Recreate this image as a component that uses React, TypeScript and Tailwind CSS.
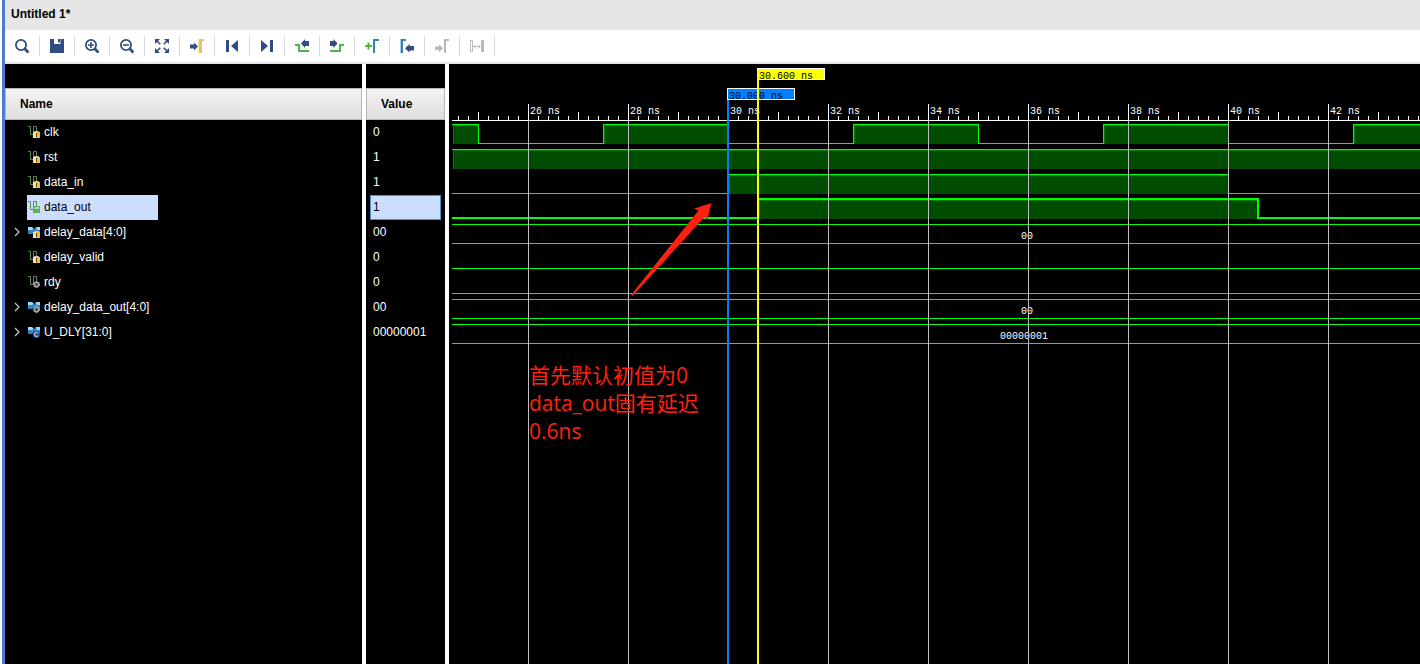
import React from "react";

const NAVY = "#2f4d82";
const GREEN = "#4cb944";
const BLUE = "#3580b4";
const GRAY = "#b9b9b9";

function Lens({ children }: { children?: React.ReactNode }) {
  return (
    <g fill="none" stroke={NAVY}>
      <circle cx="7" cy="7" r="5.1" strokeWidth="1.8" />
      <path d="M10.8 10.8 L14.4 14.4" strokeWidth="2.8" />
      {children}
    </g>
  );
}

type Tool = { label: string; disabled?: boolean; icon: React.ReactNode };

const tools: Tool[] = [
  { label: "Find", icon: <Lens /> },
  {
    label: "Save",
    icon: (
      <g>
        <path d="M1 1H5V6H12V1H15V15H1Z" fill={NAVY} />
        <path d="M9 1H11V4.5H9Z" fill={NAVY} />
        <path d="M11 1H12V6H11Z" fill="#8fa0be" />
      </g>
    ),
  },
  { label: "Zoom in", icon: <Lens><path d="M4 7H10M7 4V10" strokeWidth="1.6" /></Lens> },
  { label: "Zoom out", icon: <Lens><path d="M4 7H10" strokeWidth="1.6" /></Lens> },
  {
    label: "Zoom fit",
    icon: (
      <g>
        <path d="M1 1H6L1 6ZM15 1V6L10 1ZM1 15V10L6 15ZM15 15H10L15 10Z" fill={NAVY} />
        <path d="M2 2L6.3 6.3M14 2L9.7 6.3M2 14L6.3 9.7M14 14L9.7 9.7" stroke={NAVY} strokeWidth="1.6" />
      </g>
    ),
  },
  {
    label: "Go to cursor",
    icon: (
      <g>
        <path d="M1 6.5H5V4.5L9 8.5L5 12.5V10.5H1Z" fill={NAVY} />
        <path d="M9 1H10V15H9Z" fill="#f3e7b8" />
        <path d="M10 1H15V3H13V15H10Z" fill="#dfc568" />
      </g>
    ),
  },
  { label: "Go to start", icon: <path d="M2 2H5V14H2ZM14 2V14L7 8Z" fill={NAVY} /> },
  { label: "Go to end", icon: <path d="M11 2H14V14H11ZM2 2V14L9 8Z" fill={NAVY} /> },
  {
    label: "Previous transition",
    icon: (
      <g>
        <path d="M1 7H5V13H15" fill="none" stroke={GREEN} strokeWidth="2" />
        <path d="M15 3H11V1L7 5.5L11 10V8H15Z" fill={NAVY} />
      </g>
    ),
  },
  {
    label: "Next transition",
    icon: (
      <g>
        <path d="M1 13H11V7H15" fill="none" stroke={GREEN} strokeWidth="2" />
        <path d="M1 3H4.5V1L8.5 5.5L4.5 10V8H1Z" fill={NAVY} />
      </g>
    ),
  },
  {
    label: "Add marker",
    icon: (
      <g>
        <path d="M1 8H8M4.5 4.5V11.5" stroke={GREEN} strokeWidth="2" />
        <path d="M9 1H15V3H11V15H9Z" fill={BLUE} />
      </g>
    ),
  },
  {
    label: "Previous marker",
    icon: (
      <g>
        <path d="M1 1H2V15H1Z" fill="#a8cbe0" />
        <path d="M2 1H7V3H4V15H2Z" fill={BLUE} />
        <path d="M15 8H10.5V6L6 10.2L10.5 14.5V12.5H15Z" fill={NAVY} />
      </g>
    ),
  },
  {
    label: "Next marker",
    disabled: true,
    icon: (
      <g fill={GRAY}>
        <path d="M1 8.5H5V6.2L9 10.2L5 14.2V12H1Z" />
        <path d="M10 1H15V3H12V15H10Z" />
      </g>
    ),
  },
  {
    label: "Swap cursors",
    disabled: true,
    icon: (
      <g>
        <path d="M1.5 2.5H3.5V13.5H1.5Z" fill="none" stroke={GRAY} />
        <path d="M12 2H15V14H12Z" fill={GRAY} />
        <path d="M5 8.5H11M6.8 6.5L4.8 8.5L6.8 10.5M9.2 6.5L11.2 8.5L9.2 10.5" fill="none" stroke={GRAY} />
      </g>
    ),
  },
];

type Badge = "lock" | "out" | "gear" | "const";
type Signal = { name: string; value: string; bus?: boolean; badge: Badge; selected?: boolean };

const signals: Signal[] = [
  { name: "clk", value: "0", badge: "lock" },
  { name: "rst", value: "1", badge: "lock" },
  { name: "data_in", value: "1", badge: "lock" },
  { name: "data_out", value: "1", badge: "out", selected: true },
  { name: "delay_data[4:0]", value: "00", bus: true, badge: "lock" },
  { name: "delay_valid", value: "0", badge: "lock" },
  { name: "rdy", value: "0", badge: "gear" },
  { name: "delay_data_out[4:0]", value: "00", bus: true, badge: "gear" },
  { name: "U_DLY[31:0]", value: "00000001", bus: true, badge: "const" },
];

function SignalIcon({ bus, badge }: { bus?: boolean; badge: Badge }) {
  return (
    <svg viewBox="0 0 12 12" className="size-3 shrink-0" aria-hidden="true">
      {bus ? (
        <g>
          <path d="M0 1H4L6 3L8 1H12V8H8L6 6.5L4 8H0Z" fill="#2f86c8" />
          <path d="M0 1H4L5.5 2.7L4 4H0ZM8 1H12V4H9Z" fill="#a5d8f5" />
        </g>
      ) : (
        <path d="M0 0.5H2.5V8.5H5.5V0.5H8.5V5" fill="none" stroke="#5b8a52" />
      )}
      {badge === "lock" && (
        <g>
          <path d="M6.5 6V5.5H10.5V6" fill="none" stroke="#c9c9c9" />
          <path d="M5 6H12V12H5Z" fill="#f0bd4c" />
          <path d="M5 6H8V12H5Z" fill="#f8dfa0" />
          <path d="M8 7H9V11H8Z" fill="#5c4a2a" />
        </g>
      )}
      {badge === "out" && (
        <g>
          <path d="M5 6L7 5H12V12H5Z" fill="#5eae58" />
          <path d="M6 7.5L8 6H11V8H6Z" fill="#b5deb0" />
        </g>
      )}
      {badge === "gear" && (
        <g>
          <circle cx="8.5" cy="8.5" r="3" fill="#9a9a9a" stroke="#c6c6c6" strokeDasharray="1.2 1" />
          <circle cx="8.5" cy="8.5" r="1.2" fill="#333" />
        </g>
      )}
      {badge === "const" && (
        <g>
          <circle cx="8.5" cy="8.5" r="3.5" fill="#2a4f9e" />
          <path d="M10 7.2A2 2 0 1 0 10 9.8" fill="none" stroke="#e6eeff" />
        </g>
      )}
    </svg>
  );
}

const headCell =
  "h-8 border border-[#b8b8b8] bg-linear-to-b from-[#f4f4f4] to-[#dededf] p-0 text-left text-xs font-bold text-black";

function NameColumn() {
  return (
    <div className="w-[357px] shrink-0 bg-black pt-6">
      <table className="w-full border-separate border-spacing-0 text-xs text-white">
        <thead>
          <tr>
            <th className={headCell}>
              <span className="pl-3.5">Name</span>
            </th>
          </tr>
        </thead>
        <tbody>
          {signals.map((s) => (
            <tr key={s.name}>
              <td className="h-[25px] p-0">
                <div className="flex h-[25px] items-center">
                  <div className="flex w-[22px] shrink-0 justify-center pb-px pl-0.5">
                    {s.bus && (
                      <button type="button" aria-label={`Expand ${s.name}`} className="block">
                        <svg viewBox="0 0 8 10" className="h-2.5 w-2" aria-hidden="true">
                          <path d="M2 1L6 5L2 9" fill="none" stroke="#c8c8c8" strokeWidth="1.2" />
                        </svg>
                      </button>
                    )}
                  </div>
                  <div
                    className={
                      s.selected
                        ? "flex h-full w-[131px] items-center gap-1 bg-[#ccdeff] pb-px pl-px text-black"
                        : "flex h-full items-center gap-1 pb-px pl-px"
                    }
                  >
                    <SignalIcon bus={s.bus} badge={s.badge} />
                    <span>{s.name}</span>
                  </div>
                </div>
              </td>
            </tr>
          ))}
        </tbody>
      </table>
    </div>
  );
}

function ValueColumn() {
  return (
    <div className="w-[79px] shrink-0 bg-black pt-6">
      <table className="w-full border-separate border-spacing-0 text-xs text-white">
        <thead>
          <tr>
            <th className={headCell}>
              <span className="pl-3.5">Value</span>
            </th>
          </tr>
        </thead>
        <tbody>
          {signals.map((s) => (
            <tr key={s.name}>
              <td className="h-[25px] px-1 py-0">
                <div
                  className={
                    s.selected
                      ? "flex h-[25px] items-center border border-[#4a90c8] bg-[#ccdeff] pb-px pl-0.5 text-black"
                      : "flex h-[25px] items-center pb-px pl-[3px]"
                  }
                >
                  {s.value}
                </div>
              </td>
            </tr>
          ))}
        </tbody>
      </table>
    </div>
  );
}

/* Chart geometry: 50 px per nanosecond, 26 ns sits at x = 79. */
const timeX = (ns: number) => 79 + (ns - 26) * 50;
const START = 3;
const END = 4000;

type Span = { from: number; to: number };
type Wave = { row: number; bold?: boolean; high: Span[] };

const waves: Wave[] = [
  {
    row: 0,
    high: [
      { from: 24.48, to: 25 },
      { from: 27.5, to: 30 },
      { from: 32.5, to: 35 },
      { from: 37.5, to: 40 },
      { from: 42.5, to: 45 },
    ],
  },
  { row: 1, high: [{ from: 24.48, to: 110 }] },
  { row: 2, high: [{ from: 30, to: 40 }] },
  { row: 3, bold: true, high: [{ from: 30.6, to: 40.6 }] },
  { row: 5, high: [] },
  { row: 6, high: [] },
];

const buses = [
  { row: 4, text: "00", x: 572 },
  { row: 7, text: "00", x: 572 },
  { row: 8, text: "00000001", x: 551 },
];

function WaveTrace({ row, bold, high }: Wave) {
  const top = 60 + row * 25;
  const low = top + 19;
  const t = bold ? 2 : 1;
  const hiY = bold ? top - 1 : top;
  const loY = bold ? low - 1 : low;
  const edge = (ns: number) => Math.round(timeX(ns)) - (bold ? 1 : 0);
  let d = "";
  let x = START;
  high.forEach((s) => {
    const a = edge(s.from);
    const b = edge(s.to);
    if (a > x) d += `M${x} ${loY}H${a + t}V${loY + t}H${x}Z`;
    if (a > START) d += `M${a} ${hiY}H${a + t}V${loY + t}H${a}Z`;
    d += `M${a} ${hiY}H${b + t}V${hiY + t}H${a}Z`;
    d += `M${b} ${hiY}H${b + t}V${loY + t}H${b}Z`;
    x = b;
  });
  if (x < END) d += `M${x} ${loY}H${END}V${loY + t}H${x}Z`;
  return (
    <g>
      {high.map((s) => {
        const a = edge(s.from) + t;
        const b = edge(s.to);
        return (
          <g key={s.from}>
            <rect x={a} y={hiY + t} width={b - a} height={top + 20 - hiY - t} fill="#007d00" />
            <rect x={a + 1} y={hiY + t + 1} width={b - a - 1} height={top + 19 - hiY - t} fill="#004c00" />
          </g>
        );
      })}
      <path d={d} fill="#00ff00" />
    </g>
  );
}

const majors = [26, 28, 30, 32, 34, 36, 38, 40, 42];

function WaveView() {
  const ticks = Array.from({ length: 395 }, (_, i) => i);
  const mono = "font-['Liberation_Mono',monospace] text-[10px]";
  return (
    <div className="relative flex min-w-0 flex-1 bg-black">
      <svg className="min-h-72 w-full" shapeRendering="crispEdges" role="img" aria-label="Waveform">
        {ticks.map((i) => {
          const x = 9 + i * 10;
          const h = i % 10 === 2 ? 8 : 4;
          return <rect key={i} x={x} y={56 - h} width="1" height={h} fill="#fff" />;
        })}
        <rect x="3" y="56" width={END} height="1" fill="#fff" />
        {waves.map((w) => (
          <WaveTrace key={w.row} {...w} />
        ))}
        {buses.map((b) => (
          <g key={b.row}>
            <rect x={START} y={60 + b.row * 25} width={END} height="1" fill="#00ff00" />
            <rect x={START} y={79 + b.row * 25} width={END} height="1" fill="#00ff00" />
            <text x={b.x} y={75 + b.row * 25} fill="#fff" className={mono}>
              {b.text}
            </text>
          </g>
        ))}
        {majors.map((ns) => (
          <g key={ns}>
            <rect x={timeX(ns)} y="57" width="1" height="100%" fill="#c0c0c0" />
            <rect x={timeX(ns)} y="40" width="1" height="17" fill="#fff" />
            <text x={timeX(ns) + 2} y="50" fill="#fff" className={mono}>
              {ns} ns
            </text>
          </g>
        ))}
        <rect x="278" y="24" width="2" height="100%" fill="#0080ff" />
        <rect x="278.5" y="24.5" width="67" height="11" fill="#0080ff" stroke="#fff" />
        <text x="280" y="35" fill="#000" className={mono}>
          30.000 ns
        </text>
        <rect x="308.5" y="4.5" width="67" height="11" fill="#ffff00" stroke="#fff" />
        <rect x="308" y="6" width="2" height="100%" fill="#ffff00" />
        <text x="310" y="15" fill="#000" className={mono}>
          30.600 ns
        </text>
        <path
          d="M182 231L249.5 146.5L245 144.7L262.3 139L258.3 156L256 152.5L183.5 232Z"
          fill="#ff2010"
          shapeRendering="auto"
        />
      </svg>
      <p className="absolute top-[297px] left-20 font-['Open_Sans','Noto_Sans_CJK_SC',sans-serif] text-[21px] leading-7 whitespace-nowrap text-[#ff2010]">
        首先默认初值为0
        <br />
        data_out固有延迟
        <br />
        0.6ns
      </p>
    </div>
  );
}

export default function App() {
  return (
    <div className="flex min-h-screen bg-white pl-0.5 font-['Liberation_Sans',Arial,sans-serif]">
      <div className="w-[3px] shrink-0 bg-[#4a7dcf]" />
      <div className="flex min-w-0 flex-1 flex-col">
        <header className="flex h-[30px] items-center bg-[#e6e6e6] pb-0.5 pl-1.5">
          <h1 className="text-xs font-bold text-black">Untitled 1*</h1>
        </header>
        <div role="toolbar" aria-label="Waveform tools" className="flex h-[34px] items-center border-b-2 border-[#e6e6e6] bg-white">
          {tools.map((t) => (
            <button
              key={t.label}
              type="button"
              aria-label={t.label}
              disabled={t.disabled}
              className="flex h-5 w-[35px] shrink-0 items-center justify-center border-r border-[#d9d9d9]"
            >
              <svg viewBox="0 0 16 16" className="size-4" aria-hidden="true">
                {t.icon}
              </svg>
            </button>
          ))}
        </div>
        <main className="flex flex-1 gap-1 bg-white">
          <NameColumn />
          <ValueColumn />
          <WaveView />
        </main>
      </div>
    </div>
  );
}
